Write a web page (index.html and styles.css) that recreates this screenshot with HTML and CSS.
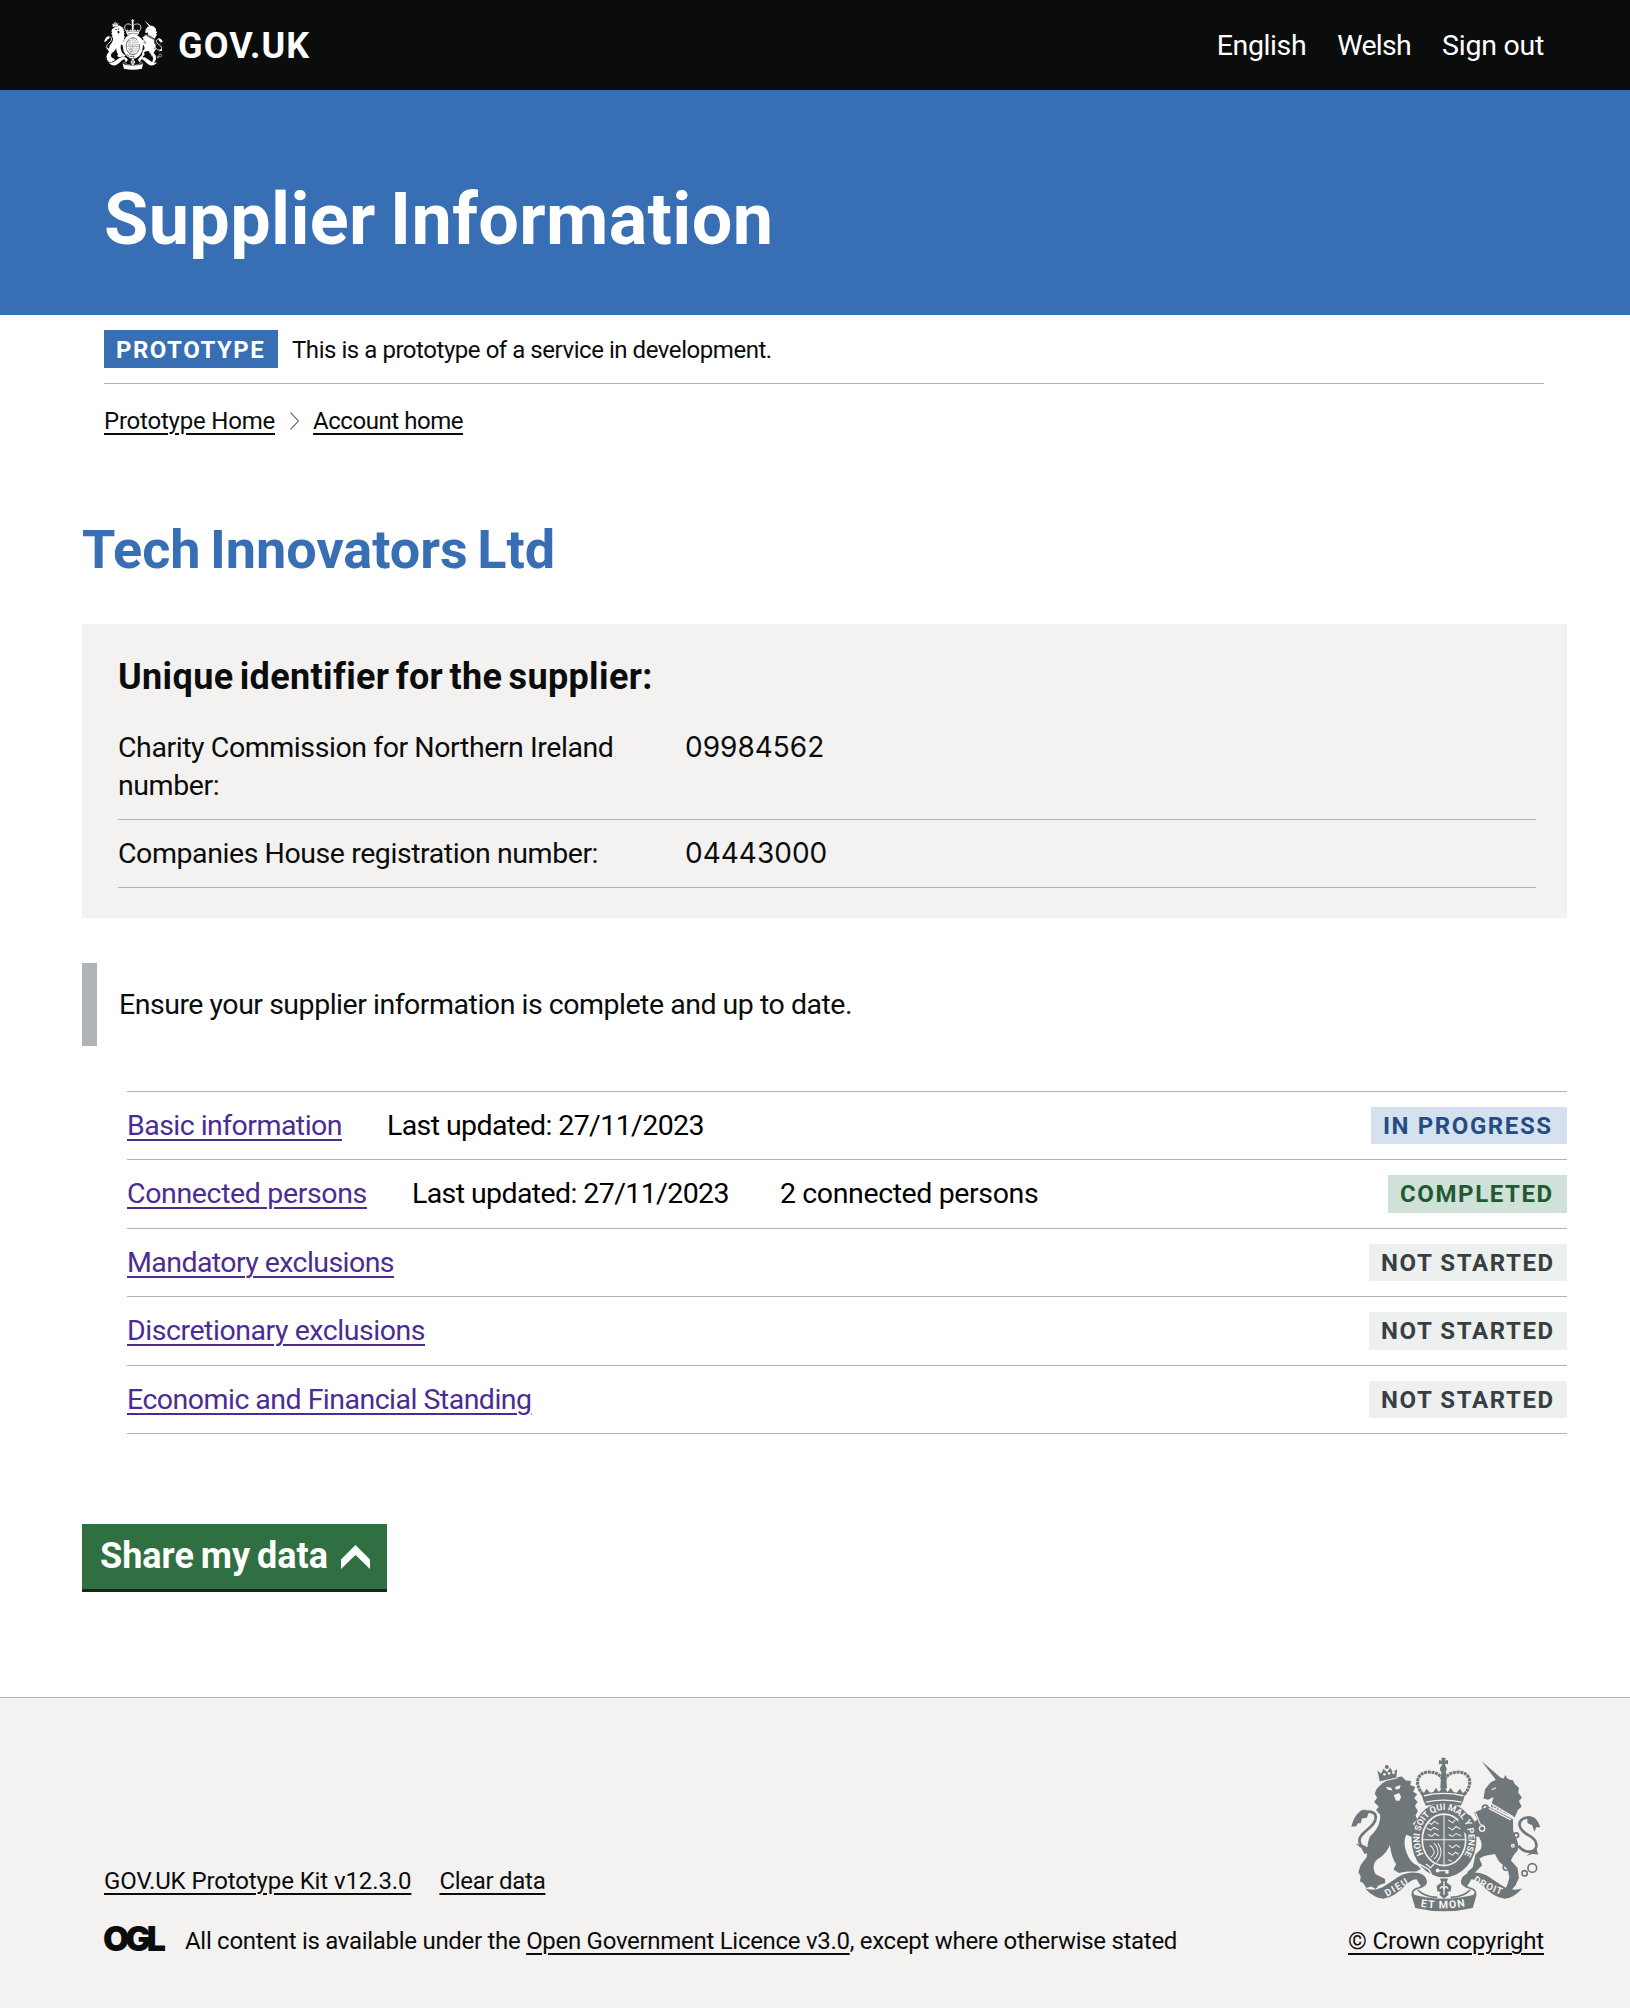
FILE: index.html
```html
<!DOCTYPE html>
<html lang="en">
<head>
<meta charset="utf-8">
<title>Supplier Information</title>
<link rel="stylesheet" href="styles.css">
</head>
<body>
<svg class="defs" aria-hidden="true">
  <symbol id="crest" viewBox="64 52 568 464" preserveAspectRatio="none">
    <!-- lion -->
    <g fill="currentColor">
      <path d="M143 92l11 10 7-15 11 11 9-14 8 13 13-8-3 30-49 6z"/>
      <circle cx="171" cy="82" r="6"/>
      <path d="M150 138c14-16 40-26 66-28l12 12 16 2-3 12 15 6-6 13 12 9-9 11 10 12-8 12 9 15-7 13 5 13-14 12c18 14 23 32 20 48l10 24-14-9-14-22-20-8c-7 10-7 28-3 44 6 22 18 42 36 48l10 10-14 8-26 0-26 4-16-10 8-16c-10-14-16-34-19-58-8 22-22 36-38 44-12 12-14 28-4 44l28 14 0 12-20 8-8 10-14-7-14 4-10-15-9-4 2-16-7-12 7-22 18-24c3-22 0-40 10-62 20-16 32-40 30-64l-12-14 8-10-14-14 9-12-7-14 6-14z"/>
      <path d="M108 210c-20-2-36 22-43 50l14 0 6-10 8 0 4-14 14-2 6-14z"/>
      <path d="M78 312l18 14 8 16 22-6-20-18z"/>
    </g>
    <path fill="none" stroke="currentColor" stroke-width="8" d="M124 324c-28 10-44-20-28-38 16-20 42-30 42-54 0-14-14-18-30-16"/>
    <g class="paper">
      <path d="M168 142l16 2 4 8-14-2zM196 142l16-6-2 10-12 4zM192 166l16-6 6 12-6 12-10-2z"/>
      <circle cx="164" cy="104" r="4"/><circle cx="178" cy="101" r="4"/><circle cx="191" cy="99" r="4"/>
    </g>
    <path fill="none" class="paper-line" stroke-width="3" d="M152 126l52-12"/>
    <!-- royal crown -->
    <g fill="currentColor">
      <path d="M334 54h13l-2 9 9-2v13l-9-2 2 10h-13l2-10-9 2v-13l9 2z"/>
      <circle cx="340" cy="88" r="10"/>
      <path d="M281 184l-9-30 10 6 8-13 10 12 10-2 8-12 9 12 13-18 13 18 9-12 9 12 9 2 10-12 8 13 10-6-9 30-7 14q-52-12-104 0z"/>
      <path d="M334 96h14l3 50h-20z"/>
    </g>
    <g fill="none" stroke="currentColor" stroke-width="9" stroke-dasharray="9 2">
      <path d="M279 164c-30-36-14-66 16-67 24 0 34 8 42 20"/>
      <path d="M403 164c30-36 14-66-16-67-24 0-34 8-42 20"/>
    </g>
    <path fill="none" class="paper-line" stroke-width="4" d="M282 168q59-14 118 0M288 187q53-12 106 0"/>
    <!-- garter and shield -->
    <ellipse cx="342" cy="300" rx="97" ry="112" fill="currentColor"/>
    <g class="paper-line" fill="none">
      <ellipse cx="342" cy="300" rx="65" ry="77" stroke-width="5"/>
      <path stroke-width="3" d="M342 224v152M278 300h128"/>
      <path stroke-width="3" d="M292 246l12 8 10-9 12 8M290 264l12 8 10-9 14 8M294 284l12 6 8-9 14 8M354 240l14 9 8-10M354 262l14 8 10-10 14 8M356 284l12 6 10-9 16 8M356 316l12 8 10-9 12 8M354 338l14 8 8-9 10 6M354 360l12 4M300 316q24 22 2 36M312 310q24 26 0 48M324 310q20 28-4 58"/>
      <path stroke-width="4" d="M268 372l30 18 10 20M288 372l14 12 10-12M322 392h34"/>
    </g>
    <g class="paper"><circle cx="323" cy="392" r="6"/><circle cx="351" cy="397" r="5"/></g>
    <!-- unicorn -->
    <g fill="currentColor">
      <path d="M454 64l62 54-10 14z"/>
      <path d="M465 148l16-20 28-14 12 2 4-10 8 12 16 4 4 10 13 12-2 14 11 16-9 10 8 16-12 12-8 20-26-10-46-22 8-28-16 8-14-4z"/>
      <path d="M474 200l74 38c2 20-2 34 6 48 10 20 12 34 8 46l-12 14-8 16 20 22 4 30-10 22-12 14-20 2 8-20 6-22-6-22-26-24-12-22-32 6-14 8 8 20-26 26-22 8 4-14 16-14 8-38 16-16c6-16 0-26-6-38l-22 2-26-16-14-34 8-16 14-6 16 8 12 18 8-8-10-20z"/>
      <path d="M590 230c20-4 32 8 40 32l-12 0-6 14-6-20-14-6z"/>
      <path d="M588 348l18-14 10-14 8 24-18-2z"/>
    </g>
    <g fill="none" stroke="currentColor">
      <path stroke-width="8" d="M564 318c24 28 64 20 52-12-8-22-42-20-48-50-2-14 14-26 34-22"/>
      <circle cx="465" cy="204" r="8" stroke-width="5"/>
      <circle cx="528" cy="382" r="9" stroke-width="5"/><circle cx="546" cy="403" r="8" stroke-width="5"/>
      <circle cx="583" cy="400" r="8" stroke-width="5"/><circle cx="606" cy="384" r="13" stroke-width="5"/>
      <circle cx="558" cy="286" r="7" stroke-width="5"/>
    </g>
    <g fill="none" class="paper-line">
      <path stroke-width="4" d="M480 190l68 40M476 206l66 34"/>
      <path stroke-width="3" d="M484 150l14-6M436 218l14 34 14 8M488 198l6 10 8-4M506 208l6 10 8-4"/>
      <circle cx="456" cy="266" r="8" stroke-width="4"/>
      <circle cx="548" cy="318" r="4" stroke-width="4"/>
    </g>
    <!-- motto ribbon -->
    <g fill="currentColor">
      <path d="M106 446q30 8 52-4c34-18 54-44 90-44 26 0 42 10 42 26l-14 20-16-26c-30 0-48 52-100 58-18 0-34-10-54-30z"/>
      <path d="M576 446q-30 8-52-4c-34-18-54-44-88-44-26 0-42 10-42 26l14 20 16-26c30 0 48 52 100 58 18 0 32-10 52-30z"/>
      <path d="M244 462q96 28 196 0l-12 42q-86 20-172 0z"/>
      <path d="M330 416h24l-4 12 14 10-2 16-10 2 4 8-14 12-14-12 4-8-10-2-2-16 14-10z"/>
    </g>
    <g fill="none" stroke="currentColor" stroke-width="5">
      <path d="M284 416c14 18-6 24-24 30-12 4-16 12-8 20M400 416c-14 18 6 24 24 30 12 4 16 12 8 20M264 450q18 20 58 22M420 450q-18 20-58 22"/>
    </g>
    <path class="paper-line" fill="none" stroke-width="4" d="M342 424v40M330 446q8-14 12 4q4-18 12-4"/>
  </symbol>
</svg>

<header class="header">
  <div class="wrap header-row">
    <a class="logo" href="#">
      <svg class="logo-crest"><use href="#crest"/></svg>
      <span class="logo-text">GOV.UK</span>
    </a>
    <nav class="header-nav">
      <a class="t-english" href="#">English</a>
      <a class="t-welsh" href="#">Welsh</a>
      <a class="t-signout" href="#">Sign out</a>
    </nav>
  </div>
</header>

<div class="masthead">
  <div class="wrap"><h1 class="masthead-title">Supplier Information</h1></div>
</div>

<div class="wrap">
  <div class="phase">
    <strong class="phase-tag">PROTOTYPE</strong>
    <span class="phase-text">This is a prototype of a service in development.</span>
  </div>
  <nav class="breadcrumbs">
    <a class="t-home" href="#">Prototype Home</a>
    <svg class="crumb-arrow" viewBox="0 0 11 20"><path d="M1.5 1.5L9.5 10L1.5 18.5"/></svg>
    <a class="t-account" href="#">Account home</a>
  </nav>
</div>

<main class="main">
  <h2 class="supplier">Tech Innovators Ltd</h2>

  <section class="identifiers">
    <h3 class="identifiers-title">Unique identifier for the supplier:</h3>
    <dl class="summary">
      <div class="summary-row"><dt>Charity Commission for Northern Ireland number:</dt><dd>09984562</dd></div>
      <div class="summary-row"><dt>Companies House registration number:</dt><dd>04443000</dd></div>
    </dl>
  </section>

  <p class="inset">Ensure your supplier information is complete and up to date.</p>

  <ul class="tasks">
    <li class="task"><a class="t-basic" href="#">Basic information</a><span class="updated">Last updated: 27/11/2023</span><strong class="tag tag-blue">IN PROGRESS</strong></li>
    <li class="task"><a class="t-connected" href="#">Connected persons</a><span class="updated">Last updated: 27/11/2023</span><span class="count">2 connected persons</span><strong class="tag tag-green">COMPLETED</strong></li>
    <li class="task"><a class="t-mandatory" href="#">Mandatory exclusions</a><strong class="tag tag-grey">NOT STARTED</strong></li>
    <li class="task"><a class="t-discretionary" href="#">Discretionary exclusions</a><strong class="tag tag-grey">NOT STARTED</strong></li>
    <li class="task"><a class="t-economic" href="#">Economic and Financial Standing</a><strong class="tag tag-grey">NOT STARTED</strong></li>
  </ul>

  <button class="button" type="button">Share my data
    <svg class="button-arrow" viewBox="0 0 29 24"><path d="M0 14.5L14.5 0L29 14.5V24L14.5 10L0 24Z"/></svg>
  </button>
</main>

<footer class="footer">
  <div class="wrap footer-row">
    <div class="footer-main">
      <div class="footer-links">
        <a class="t-kit" href="#">GOV.UK Prototype Kit v12.3.0</a>
        <a class="t-clear" href="#">Clear data</a>
      </div>
      <div class="licence">
        <svg class="ogl" viewBox="0 0 62 26"><text x="-1" y="25" textLength="63" lengthAdjust="spacing">OGL</text></svg>
        <span class="licence-text">All content is available under the <a href="#">Open Government Licence v3.0</a>, except where otherwise stated</span>
      </div>
    </div>
    <div class="copyright">
      <svg class="footer-crest" viewBox="64 52 568 464" preserveAspectRatio="none">
        <use href="#crest" x="64" y="52" width="568" height="464"/>
        <defs>
          <path id="garter" d="M281 343A73 86 0 1 1 398 352"/>
          <path id="dieu" d="M172 470Q205 452 240 428"/>
          <path id="droit" d="M428 424Q465 448 516 466"/>
          <path id="mon" d="M272 500Q342 512 414 497"/>
        </defs>
        <g class="motto">
          <text class="motto-small"><textPath href="#garter" textLength="350">HONI SOIT QUI MAL Y PENSE</textPath></text>
          <text><textPath href="#dieu" textLength="76">DIEU</textPath></text>
          <text><textPath href="#droit" textLength="94">DROIT</textPath></text>
          <text class="motto-large"><textPath href="#mon" textLength="134">ET MON</textPath></text>
        </g>
      </svg>
      <a href="#">© Crown copyright</a>
    </div>
  </div>
</footer>
</body>
</html>
```
FILE: styles.css
```css
* { box-sizing: border-box; }

body {
  margin: 0;
  background: #fff;
  color: #0b0c0c;
  font-family: Roboto, "Liberation Sans", sans-serif;
  font-size: 28.5px;
  line-height: 37.5px;
}

h1, h2, h3, p, ul, dl, dd { margin: 0; padding: 0; }

a {
  color: inherit;
  text-decoration: underline;
  text-decoration-thickness: 2px;
  text-underline-offset: 4px;
}

.defs { display: block; width: 0; height: 0; }
.paper { fill: var(--paper); }
.paper-line { stroke: var(--paper); }

.wrap { width: 1440px; margin-left: 104px; }

/* Header */
.header { background: #0b0c0c; color: #fff; --paper: #0b0c0c; }
.header-row { display: flex; align-items: center; justify-content: space-between; height: 90px; }
.header a { text-decoration: none; }
.logo { display: flex; align-items: center; gap: 15px; }
.logo-crest { width: 59px; height: 51px; margin-top: -2px; }
.logo-text { padding-top: 3px; font-size: 36px; font-weight: 700; letter-spacing: 1.1px; }
.header-nav { display: flex; gap: 31px; padding-top: 2px; letter-spacing: -0.4px; }
.t-welsh { letter-spacing: -0.7px; }
.t-signout { letter-spacing: -0.25px; }

/* Masthead */
.masthead { height: 225px; padding-top: 92px; background: #376eb4; color: #fff; }
.masthead-title { font-size: 72px; line-height: 75px; letter-spacing: 0.35px; word-spacing: -4px; }

/* Phase banner and breadcrumbs */
.phase {
  display: flex;
  align-items: center;
  gap: 14px;
  padding: 15px 0;
  border-bottom: 1px solid #b1b4b6;
  font-size: 24px;
  line-height: 36px;
}
.phase-tag {
  width: 174px;
  height: 38px;
  padding: 2px 0 0 12px;
  background: #376eb4;
  color: #fff;
  letter-spacing: 1.5px;
}
.phase-text { padding-top: 2px; letter-spacing: -0.45px; }
.breadcrumbs { display: flex; align-items: center; margin-top: 22px; font-size: 24px; line-height: 30px; }
.crumb-arrow { width: 11px; height: 20px; margin: 0 13px 0 14px; fill: none; stroke: #6f777b; stroke-width: 1.2; }
.t-home { letter-spacing: -0.21px; }
.t-account { letter-spacing: -0.45px; }

/* Main */
.main { width: 1485px; margin: 76px 0 0 82px; }
.supplier { color: #376eb4; font-size: 54px; line-height: 75px; letter-spacing: 0; word-spacing: -4px; }

.identifiers { margin-top: 37px; padding: 31px 31px 30px 36px; background: #f3f2f1; }
.identifiers-title { font-size: 36px; line-height: 45px; letter-spacing: 0.35px; word-spacing: -3px; }
.summary { margin-top: 14px; letter-spacing: -0.43px; }
.summary-row {
  display: grid;
  grid-template-columns: 520px 1fr;
  column-gap: 47px;
  padding: 15px 0;
  border-bottom: 1px solid #b1b4b6;
}
.summary-row + .summary-row { padding-bottom: 14.5px; }
.summary-row dd { font-family: Inter, Roboto, sans-serif; font-size: 28px; letter-spacing: 0; }

.inset {
  height: 83px;
  margin-top: 45px;
  padding: 23px 0 0 22px;
  border-left: 15px solid #b1b4b6;
  letter-spacing: -0.48px;
}

.tasks { margin: 45px 0 0 45px; border-top: 1px solid #b1b4b6; list-style: none; }
.task { display: flex; align-items: center; height: 68.4px; border-bottom: 1px solid #b1b4b6; }
.task a { color: #4c2c92; }
.updated { margin-left: 45px; color: #000; letter-spacing: -0.6px; }
.count { margin-left: 51px; color: #000; letter-spacing: -0.38px; }
.t-basic { letter-spacing: -0.54px; }
.t-connected { letter-spacing: -0.36px; }
.t-mandatory { letter-spacing: -0.57px; }
.t-discretionary { letter-spacing: -0.45px; }
.t-economic { letter-spacing: -0.52px; }

.tag { height: 37.5px; margin-left: auto; padding: 1px 0 0 12px; font-size: 24px; letter-spacing: 1.6px; }
.tag-blue { width: 196px; background: #d5e1ef; color: #244d85; }
.tag-green { width: 179px; background: #cfe1d8; color: #225a30; }
.tag-grey { width: 198px; background: #eeefef; color: #383f43; }

.button {
  display: flex;
  align-items: center;
  gap: 13px;
  width: 305px;
  height: 68px;
  margin-top: 90px;
  padding: 1px 0 0 18px;
  border: 0;
  border-bottom: 3px solid #12291a;
  background: #2f6f41;
  color: #fff;
  font: 700 36px/45px Roboto, "Liberation Sans", sans-serif;
  letter-spacing: 0;
  word-spacing: -2px;
}
.button-arrow { width: 29px; height: 24px; fill: currentColor; }

/* Footer */
.footer {
  height: 312px;
  margin-top: 105px;
  padding-top: 59px;
  border-top: 1px solid #b1b4b6;
  background: #f3f2f1;
  font-size: 24px;
  line-height: 30px;
  --paper: #f3f2f1;
}
.footer-row { display: flex; align-items: flex-end; justify-content: space-between; }
.footer-links { display: flex; gap: 28px; margin-bottom: 30px; }
.t-kit { letter-spacing: -0.11px; }
.t-clear { letter-spacing: -0.28px; }
.licence { display: flex; }
.licence-text { margin-left: 19px; letter-spacing: -0.29px; }
.ogl { width: 62px; height: 26px; fill: #0b0c0c; overflow: visible; }
.ogl text { font: 900 34px Inter, sans-serif; }
.copyright { display: flex; flex-direction: column; align-items: center; letter-spacing: -0.16px; }
.footer-crest { width: 190px; height: 155px; margin-bottom: 14px; color: #6f777b; }
.motto { fill: var(--paper); font: 700 29px Roboto, sans-serif; letter-spacing: 0; }
.motto-small { font-size: 27px; }
.motto-large { font-size: 32px; }
```
